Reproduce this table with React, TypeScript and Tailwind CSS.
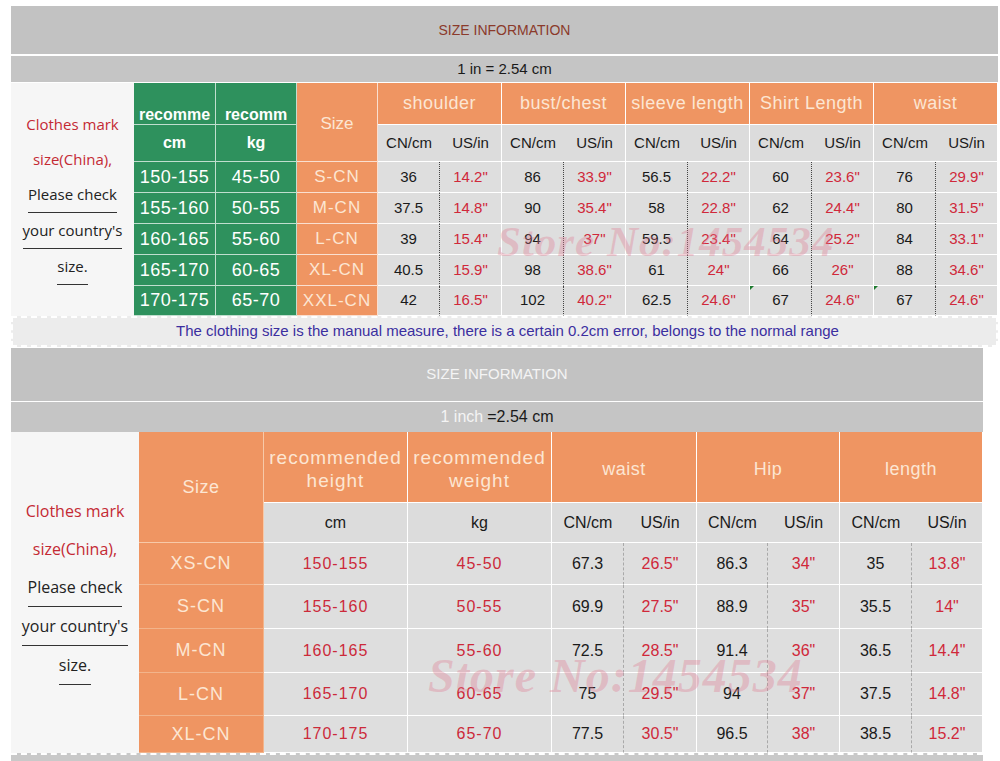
import React from 'react';

type TopRow = {
  cm: string;
  kg: string;
  size: string;
  values: [string, string][];
  marks?: number[];
};

const topRows: TopRow[] = [
  { cm: '150-155', kg: '45-50', size: 'S-CN', values: [['36', '14.2"'], ['86', '33.9"'], ['56.5', '22.2"'], ['60', '23.6"'], ['76', '29.9"']] },
  { cm: '155-160', kg: '50-55', size: 'M-CN', values: [['37.5', '14.8"'], ['90', '35.4"'], ['58', '22.8"'], ['62', '24.4"'], ['80', '31.5"']] },
  { cm: '160-165', kg: '55-60', size: 'L-CN', values: [['39', '15.4"'], ['94', '37"'], ['59.5', '23.4"'], ['64', '25.2"'], ['84', '33.1"']] },
  { cm: '165-170', kg: '60-65', size: 'XL-CN', values: [['40.5', '15.9"'], ['98', '38.6"'], ['61', '24"'], ['66', '26"'], ['88', '34.6"']] },
  { cm: '170-175', kg: '65-70', size: 'XXL-CN', values: [['42', '16.5"'], ['102', '40.2"'], ['62.5', '24.6"'], ['67', '24.6"'], ['67', '24.6"']], marks: [3, 4] },
];

const topGroups = ['shoulder', 'bust/chest', 'sleeve length', 'Shirt Length', 'waist'];

const bottomRows = [
  { size: 'XS-CN', cm: '150-155', kg: '45-50', values: [['67.3', '26.5"'], ['86.3', '34"'], ['35', '13.8"']] },
  { size: 'S-CN', cm: '155-160', kg: '50-55', values: [['69.9', '27.5"'], ['88.9', '35"'], ['35.5', '14"']] },
  { size: 'M-CN', cm: '160-165', kg: '55-60', values: [['72.5', '28.5"'], ['91.4', '36"'], ['36.5', '14.4"']] },
  { size: 'L-CN', cm: '165-170', kg: '60-65', values: [['75', '29.5"'], ['94', '37"'], ['37.5', '14.8"']] },
  { size: 'XL-CN', cm: '170-175', kg: '65-70', values: [['77.5', '30.5"'], ['96.5', '38"'], ['38.5', '15.2"']] },
];

const bottomGroups = ['waist', 'Hip', 'length'];

// left-hand note, same wording in both charts
function SideNote({ top, lineH, size }: { top: number; lineH: number; size: 'sm' | 'lg' }) {
  const text = size === 'sm' ? 'text-[15px]' : 'text-[16px]';
  return (
    <div
      className={`flex h-full flex-col items-center bg-[#f6f6f6] font-['Open_Sans',sans-serif] ${text}`}
      style={{ paddingTop: top, lineHeight: `${lineH}px` }}
    >
      <span className="text-[#c42a34]">Clothes mark</span>
      <span className="text-[#c42a34]">size(China),</span>
      <span className="border-b border-[#333] text-[#222]">Please check</span>
      <span className="border-b border-[#333] text-[#222]">your country's</span>
      <span className="border-b border-[#333] text-[#222]">size.</span>
    </div>
  );
}

function TopTable() {
  return (
    <div className="relative w-[987px]">
      <div className="flex h-[48px] items-center justify-center bg-[#c2c2c2] text-[14px] text-[#8b3a2b]">
        SIZE INFORMATION
      </div>
      <div className="mt-[2px] flex h-[26px] items-center justify-center bg-[#c5c5c5] text-[15px] text-[#1a1a1a]">
        1 in = 2.54 cm
      </div>
      <div className="mt-px grid grid-cols-[123px_82px_81px_81px_repeat(10,62px)] grid-rows-[42px_37px_31px_31px_31px_31px_30px]">
        <div className="col-start-1 row-span-7 row-start-1">
          <SideNote top={24} lineH={35} size="sm" />
        </div>

        <div className="col-start-2 row-start-1 flex items-end justify-center border-r border-b border-white/70 bg-[#2e915d] pb-[1px] text-[16px] leading-[16px] font-bold text-white">
          recomme
        </div>
        <div className="col-start-3 row-start-1 flex items-end justify-center border-r border-b border-white/70 bg-[#2e915d] pb-[1px] text-[16px] leading-[16px] font-bold text-white">
          recomm
        </div>
        <div className="col-start-2 row-start-2 flex items-center justify-center border-r border-b border-white/70 bg-[#2e915d] text-[16px] font-bold text-white">
          cm
        </div>
        <div className="col-start-3 row-start-2 flex items-center justify-center border-r border-b border-white/70 bg-[#2e915d] text-[16px] font-bold text-white">
          kg
        </div>
        <div className="col-start-4 row-span-2 row-start-1 flex items-center justify-center border-r border-b border-white/70 bg-[#ef9562] pt-[4px] text-[17px] text-[#fce6d3]">
          Size
        </div>

        {topGroups.map((g) => (
          <div
            key={g}
            className="col-span-2 row-start-1 flex items-center justify-center border-r border-b border-white bg-[#ef9562] text-[18px] tracking-[0.5px] text-[#fce6d3]"
          >
            {g}
          </div>
        ))}
        {topGroups.map((g) => (
          <React.Fragment key={g + '-sub'}>
            <div className="row-start-2 flex items-center justify-center border-b border-white bg-[#dcdcdc] text-[15px] text-[#1a1a1a]">
              CN/cm
            </div>
            <div className="row-start-2 flex items-center justify-center border-r border-b border-white bg-[#dcdcdc] text-[15px] text-[#1a1a1a]">
              US/in
            </div>
          </React.Fragment>
        ))}

        {topRows.map((r) => (
          <React.Fragment key={r.cm}>
            <div className="col-start-2 flex items-center justify-center border-r border-b border-white/70 bg-[#2e915d] text-[18px] tracking-[0.5px] text-white">
              {r.cm}
            </div>
            <div className="flex items-center justify-center border-r border-b border-white/70 bg-[#2e915d] text-[18px] tracking-[0.5px] text-white">
              {r.kg}
            </div>
            <div className="flex items-center justify-center border-r border-b border-white/70 bg-[#ef9562] text-[17px] tracking-[1px] text-[#fce6d3]">
              {r.size}
            </div>
            {r.values.map(([cn, us], i) => (
              <React.Fragment key={i}>
                <div className="relative flex items-center justify-center border-r border-b border-r-[#444] border-b-white border-dotted bg-[#dedede] text-[15px] text-[#1a1a1a] [border-bottom-style:solid]">
                  {r.marks?.includes(i) && (
                    <span className="absolute top-0 left-0 h-0 w-0 border-t-[4px] border-r-[4px] border-t-[#1d7a2e] border-r-transparent" />
                  )}
                  {cn}
                </div>
                <div className="flex items-center justify-center border-r border-b border-white bg-[#dedede] text-[15px] text-[#d0283a]">
                  {us}
                </div>
              </React.Fragment>
            ))}
          </React.Fragment>
        ))}
      </div>
      <div className="flex h-[31px] items-center justify-center border-2 border-dashed border-white bg-[#ececec] pl-[6px] text-[15px] text-[#3b2fa0]">
        The clothing size is the manual measure, there is a certain 0.2cm error, belongs to the normal range
      </div>
      <div className="pointer-events-none absolute top-[204px] left-[486px] font-['Liberation_Serif',serif] text-[43px] font-bold italic tracking-[1px] text-[#e07a90]/35">
        Store No:1454534
      </div>
    </div>
  );
}

function BottomTable() {
  return (
    <div className="relative w-[972px]">
      <div className="flex h-[53px] items-center justify-center bg-[#c2c2c2] text-[15px] text-[#f4f4f4]">
        SIZE INFORMATION
      </div>
      <div className="mt-px flex h-[30px] items-center justify-center bg-[#c5c5c5] text-[16px]">
        <span className="text-[#f4f4f4]">1 inch</span>
        <span className="ml-[4px] text-[#1a1a1a]">=2.54 cm</span>
      </div>
      <div className="grid grid-cols-[128px_125px_144px_144px_72px_73px_71px_72px_72px_71px] grid-rows-[71px_40px_42px_44px_44px_43px_37px]">
        <div className="col-start-1 row-span-7 row-start-1">
          <SideNote top={60} lineH={38} size="lg" />
        </div>

        <div className="col-start-2 row-span-2 row-start-1 flex items-center justify-center border-r border-b border-[#f7c9a8] bg-[#ef9562] text-[18px] tracking-[0.5px] text-[#fce6d3]">
          Size
        </div>
        <div className="col-start-3 row-start-1 flex flex-col items-center justify-center border-r border-b border-white bg-[#ef9562] pt-[3px] text-[19px] leading-[23px] tracking-[1px] text-[#fce6d3]">
          <span>recommended</span>
          <span>height</span>
        </div>
        <div className="col-start-4 row-start-1 flex flex-col items-center justify-center border-r border-b border-white bg-[#ef9562] pt-[3px] text-[19px] leading-[23px] tracking-[1px] text-[#fce6d3]">
          <span>recommended</span>
          <span>weight</span>
        </div>
        {bottomGroups.map((g) => (
          <div
            key={g}
            className="col-span-2 row-start-1 flex items-center justify-center border-r border-b border-white bg-[#ef9562] pt-[4px] text-[18px] tracking-[0.5px] text-[#fce6d3]"
          >
            {g}
          </div>
        ))}

        <div className="col-start-3 row-start-2 flex items-center justify-center border-r border-b border-white bg-[#dcdcdc] text-[16px] text-[#1a1a1a]">
          cm
        </div>
        <div className="col-start-4 row-start-2 flex items-center justify-center border-r border-b border-white bg-[#dcdcdc] text-[16px] text-[#1a1a1a]">
          kg
        </div>
        {bottomGroups.map((g) => (
          <React.Fragment key={g + '-sub'}>
            <div className="row-start-2 flex items-center justify-center border-b border-white bg-[#dcdcdc] text-[16px] text-[#1a1a1a]">
              CN/cm
            </div>
            <div className="row-start-2 flex items-center justify-center border-r border-b border-white bg-[#dcdcdc] text-[16px] text-[#1a1a1a]">
              US/in
            </div>
          </React.Fragment>
        ))}

        {bottomRows.map((r) => (
          <React.Fragment key={r.size}>
            <div className="col-start-2 flex items-center justify-center border-r border-b border-[#f2b48b] bg-[#ef9562] text-[18px] tracking-[1px] text-[#fce6d3]">
              {r.size}
            </div>
            <div className="flex items-center justify-center border-r border-b border-white bg-[#dedede] text-[16px] tracking-[1px] text-[#cc2a3a]">
              {r.cm}
            </div>
            <div className="flex items-center justify-center border-r border-b border-white bg-[#dedede] text-[16px] tracking-[1px] text-[#cc2a3a]">
              {r.kg}
            </div>
            {r.values.map(([cn, us], i) => (
              <React.Fragment key={i}>
                <div className="flex items-center justify-center border-r border-b border-r-[#a9a9a9] border-b-white bg-[#dedede] text-[16px] text-[#1a1a1a] [border-right-style:dashed]">
                  {cn}
                </div>
                <div className="flex items-center justify-center border-r border-b border-white bg-[#dedede] text-[16px] text-[#d0283a]">
                  {us}
                </div>
              </React.Fragment>
            ))}
          </React.Fragment>
        ))}
      </div>
      <div className="h-[20px] border-t-2 border-dashed border-white bg-[#c9c9c9]" />
      <div className="pointer-events-none absolute top-[292px] left-[417px] font-['Liberation_Serif',serif] text-[48px] font-bold italic tracking-[1px] text-[#e07a90]/35">
        Store No:1454534
      </div>
    </div>
  );
}

export default function App() {
  return (
    <div className="h-[761px] w-[1000px] overflow-hidden bg-white pt-[6px] pl-[11px] font-['Liberation_Sans',Arial,sans-serif]">
      <TopTable />
      <div className="mt-px">
        <BottomTable />
      </div>
    </div>
  );
}
